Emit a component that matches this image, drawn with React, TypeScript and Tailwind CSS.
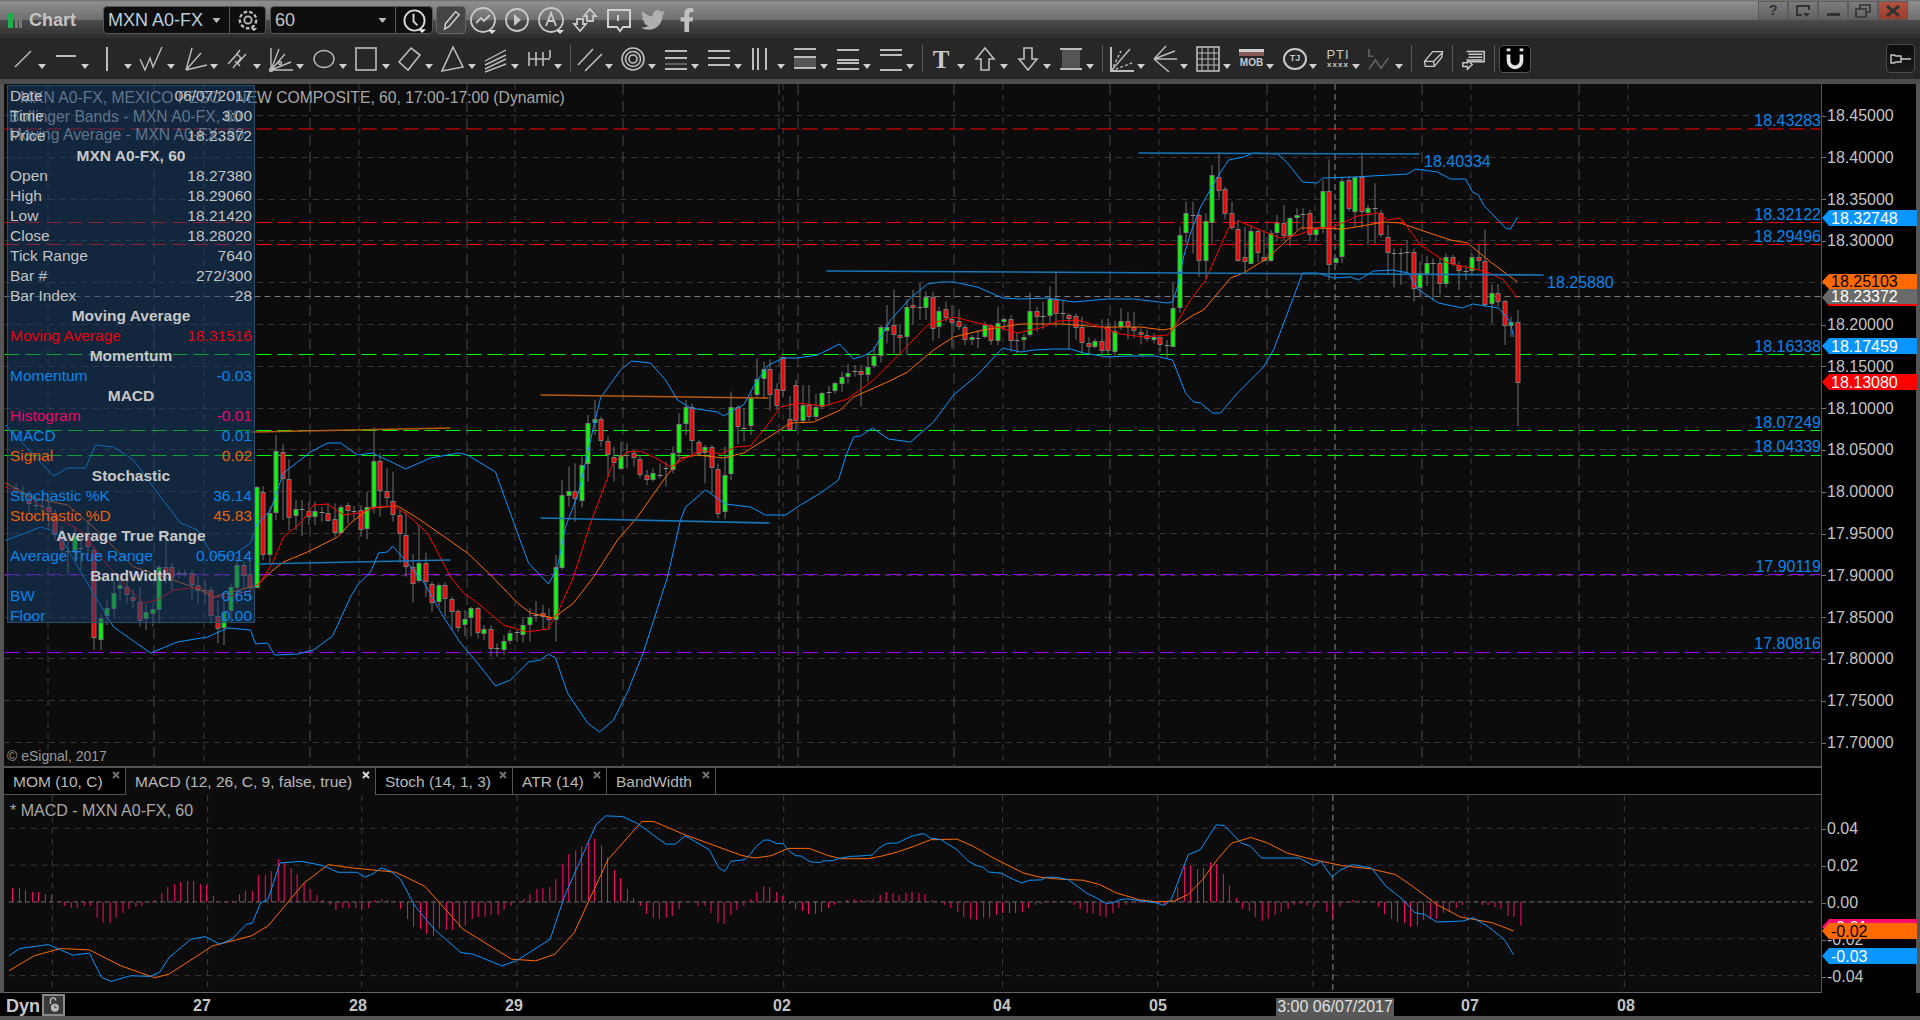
import type { ReactNode } from "react";
import { FaFacebookF, FaTwitter } from "react-icons/fa";

type Pt = [number, number];
type Bar = [number, number, number, number, number];

// bars are read right to left, y values in 3x crop units: real y = y0 + v / 3
// [bodyTop, bodyBottom, wickTop, wickBottom, 0 green / 1 red / 2 doji]
const barGroups: { y0: number; bars: Bar[] }[] = [
  {
    y0: 130,
    bars: [
      [575, 755, 540, 888, 1], [575, 584, 560, 620, 0], [514, 586, 510, 645, 1], [490, 515, 462, 530, 1],
      [490, 520, 462, 580, 0], [392, 522, 298, 530, 1], [380, 388, 345, 420, 1], [380, 418, 370, 435, 0],
      [422, 422, 405, 450, 2], [404, 418, 395, 480, 1], [382, 400, 375, 408, 1], [382, 460, 370, 472, 0],
      [400, 460, 385, 495, 1], [398, 398, 385, 512, 2], [398, 427, 378, 468, 0], [430, 472, 395, 500, 0],
      [365, 472, 355, 515, 1], [365, 365, 330, 430, 2], [368, 368, 355, 465, 2], [368, 368, 355, 472, 2],
      [320, 366, 285, 435, 1], [248, 310, 240, 322, 1], [233, 233, 160, 340, 2], [233, 244, 225, 345, 0],
      [142, 245, 68, 295, 1], [142, 245, 140, 290, 0], [150, 235, 138, 245, 1], [152, 378, 140, 400, 0],
      [383, 394, 380, 405, 0], [182, 400, 88, 450, 1], [182, 294, 150, 310, 0], [298, 312, 295, 330, 0],
      [250, 312, 240, 335, 1], [252, 252, 235, 300, 2], [255, 262, 235, 300, 0], [265, 315, 260, 350, 0],
      [278, 315, 225, 330, 1], [278, 304, 255, 335, 0], [308, 388, 300, 395, 0], [380, 388, 300, 395, 1],
      [302, 365, 295, 395, 1], [302, 397, 285, 400, 0], [382, 394, 290, 425, 1], [296, 388, 270, 395, 1],
      [250, 292, 215, 300, 1], [178, 250, 170, 268, 1], [140, 180, 68, 205, 1], [134, 275, 105, 340, 0],
      [272, 388, 250, 445, 0], [256, 390, 250, 440, 1], [255, 255, 215, 370, 2], [248, 306, 215, 340, 0],
      [316, 532, 290, 548, 0], [535, 650, 460, 652, 0], [645, 645, 630, 685, 2], [620, 640, 615, 665, 1],
      [620, 625, 610, 640, 0], [615, 625, 600, 635, 1], [605, 610, 595, 643, 1], [590, 600, 545, 625, 1],
      [572, 587, 545, 628, 1], [574, 590, 535, 600, 0], [602, 662, 572, 680, 0], [592, 660, 565, 680, 1],
    ],
  },
  {
    y0: 250,
    bars: [
      [272, 298, 208, 315, 1], [272, 286, 265, 295, 0], [278, 286, 262, 310, 1], [230, 275, 200, 310, 1],
      [197, 230, 190, 270, 1], [194, 202, 190, 298, 1], [188, 188, 150, 220, 2], [146, 188, 65, 230, 1],
      [146, 195, 108, 225, 0], [197, 197, 155, 238, 2], [182, 196, 170, 245, 1], [182, 250, 128, 260, 0],
      [260, 265, 250, 300, 0], [270, 270, 250, 310, 2], [208, 272, 195, 305, 1], [208, 215, 205, 240, 0],
      [218, 268, 170, 285, 0], [226, 270, 222, 285, 1], [226, 258, 215, 265, 0], [263, 263, 240, 295, 2],
      [262, 268, 255, 285, 0], [232, 268, 225, 285, 1], [214, 230, 178, 240, 1], [206, 214, 165, 295, 1],
      [178, 202, 155, 215, 1], [182, 226, 170, 265, 0], [142, 235, 125, 272, 1], [142, 172, 125, 210, 0],
      [170, 170, 100, 210, 2], [166, 172, 120, 225, 1], [170, 256, 148, 315, 0], [254, 258, 225, 310, 1],
      [224, 250, 118, 310, 1], [230, 238, 165, 280, 0], [232, 315, 225, 338, 0], [318, 346, 290, 355, 0],
      [350, 372, 318, 395, 0], [362, 372, 345, 470, 1], [362, 362, 345, 380, 2], [368, 376, 342, 400, 0],
      [380, 397, 365, 425, 0], [400, 420, 395, 430, 0], [425, 425, 408, 468, 2], [428, 468, 425, 478, 0],
      [472, 498, 432, 510, 0], [464, 496, 405, 512, 1], [464, 510, 405, 520, 0], [406, 512, 390, 543, 1],
      [508, 538, 438, 545, 1], [322, 420, 320, 440, 1], [418, 466, 400, 480, 1], [358, 432, 328, 482, 1],
      [358, 384, 335, 445, 0], [388, 432, 325, 440, 0], [443, 525, 430, 555, 0], [533, 533, 475, 575, 2],
      [472, 528, 465, 582, 1], [472, 670, 425, 690, 0],
    ],
  },
  {
    y0: 400,
    bars: [
      [224, 332, 140, 358, 0], [206, 338, 190, 355, 1], [142, 202, 135, 280, 1], [142, 156, 135, 250, 0],
      [125, 158, 120, 165, 1], [20, 120, 10, 165, 1], [22, 70, 0, 105, 0], [72, 155, 40, 175, 0],
      [158, 205, 140, 220, 0], [205, 205, 185, 260, 2], [225, 225, 190, 235, 2], [218, 235, 205, 245, 0],
      [224, 235, 210, 255, 1], [176, 220, 165, 235, 1], [160, 172, 150, 200, 1], [166, 166, 130, 205, 2],
      [166, 204, 125, 210, 0], [172, 188, 140, 245, 1], [124, 164, 110, 230, 1], [58, 122, 50, 140, 1],
      [58, 68, 0, 105, 0], [70, 190, 45, 245, 0], [194, 298, 170, 322, 0], [274, 295, 190, 365, 1],
      [272, 284, 200, 320, 0], [286, 502, 240, 510, 0], [500, 656, 465, 725, 0], [652, 658, 625, 690, 1],
      [640, 650, 615, 690, 1], [645, 645, 603, 665, 2], [650, 670, 625, 725, 0], [674, 700, 655, 728, 0],
      [697, 697, 690, 725, 2], [698, 720, 690, 732, 0], [724, 748, 705, 765, 0], [744, 744, 730, 770, 2],
      [686, 742, 675, 770, 1], [686, 697, 675, 720, 0], [625, 696, 620, 715, 1], [625, 652, 620, 710, 0],
      [658, 673, 630, 708, 0], [634, 682, 628, 695, 1], [598, 634, 590, 690, 1], [556, 595, 548, 650, 1],
      [556, 604, 550, 620, 0], [553, 606, 545, 635, 1], [490, 544, 458, 590, 1], [490, 540, 375, 548, 0],
      [502, 550, 462, 608, 1], [404, 498, 335, 530, 1], [346, 400, 330, 488, 1], [302, 342, 215, 365, 1],
      [272, 290, 205, 320, 1], [182, 268, 160, 350, 1], [182, 318, 82, 340, 0], [322, 385, 275, 418, 0],
      [330, 388, 315, 410, 1], [332, 332, 318, 360, 2], [314, 330, 308, 370, 1], [320, 396, 315, 402, 0],
      [358, 398, 310, 410, 1], [338, 360, 310, 365, 1], [335, 335, 320, 365, 2], [332, 348, 305, 375, 0],
      [332, 346, 305, 375, 1], [326, 326, 300, 408, 2], [328, 346, 300, 390, 0], [236, 350, 178, 392, 1],
      [155, 234, 132, 360, 1], [152, 336, 105, 360, 0], [340, 462, 320, 488, 0], [276, 462, 258, 480, 1],
      [260, 560, 258, 562, 0],
    ],
  },
  {
    y0: 370,
    bars: [
      [612, 650, 570, 690, 1], [585, 615, 575, 655, 1], [585, 650, 560, 700, 0], [650, 718, 640, 760, 0],
      [725, 770, 690, 825, 0], [738, 775, 690, 820, 1], [660, 735, 650, 760, 1], [660, 660, 630, 700, 2],
      [645, 660, 620, 700, 1], [608, 640, 600, 690, 1], [608, 608, 600, 620, 2], [610, 610, 600, 625, 2],
      [590, 620, 580, 660, 1], [592, 610, 480, 640, 1], [590, 715, 585, 760, 0], [718, 730, 700, 770, 0],
      [725, 742, 700, 780, 0], [695, 748, 650, 770, 1], [680, 690, 660, 715, 1], [650, 670, 625, 700, 1],
      [645, 655, 625, 690, 0], [668, 712, 625, 745, 0], [715, 735, 690, 765, 0], [745, 808, 730, 840, 0],
      [540, 802, 530, 840, 1], [498, 528, 450, 560, 1], [535, 535, 500, 600, 2], [498, 540, 470, 570, 0],
      [542, 542, 500, 610, 2], [502, 538, 470, 580, 1], [440, 492, 420, 510, 1], [412, 425, 395, 470, 1],
      [408, 408, 385, 425, 2], [405, 405, 390, 420, 2], [390, 400, 365, 430, 1], [370, 370, 350, 395, 2],
      [355, 355, 340, 375, 2],
    ],
  },
];

const upper: Pt[] = [
  [5, 425], [53, 476], [67, 468], [85, 468], [95, 445], [113, 447], [133, 460], [157, 493], [180, 523], [197, 530], [213, 557], [233, 555], [250, 543], [256, 525], [270, 510], [283, 473], [310, 452], [327, 443], [340, 443], [357, 455], [372, 453], [393, 463], [405, 469], [430, 458], [458, 453], [467, 455], [495, 472], [517, 533], [528, 563], [548, 584], [557, 567], [565, 527], [578, 493], [593, 427], [600, 398], [620, 370], [631, 361], [650, 363], [665, 380], [677, 400], [690, 408], [717, 412], [723, 416], [733, 410], [743, 405], [755, 383], [768, 365], [783, 358], [797, 358], [817, 355], [839, 344], [853, 359], [865, 355], [873, 350], [890, 320], [910, 298], [927, 284], [940, 282], [953, 282], [977, 287], [1002, 298], [1020, 299], [1047, 298], [1073, 302], [1107, 299], [1133, 299], [1167, 303], [1172, 302], [1177, 287], [1183, 257], [1190, 233], [1200, 207], [1217, 177], [1228, 160], [1243, 157], [1253, 153], [1277, 154], [1287, 163], [1302, 182], [1317, 183], [1322, 178], [1353, 177], [1407, 174], [1415, 169], [1437, 172], [1450, 179], [1465, 179], [1472, 192], [1478, 195], [1483, 205], [1505, 228], [1510, 229], [1517, 217],
];
const lower: Pt[] = [
  [5, 540], [20, 535], [40, 527], [50, 530], [60, 537], [95, 597], [113, 627], [150, 653], [177, 642], [207, 637], [227, 628], [250, 630], [255, 644], [267, 643], [274, 655], [297, 654], [313, 650], [332, 636], [350, 597], [357, 585], [370, 572], [378, 553], [387, 552], [392, 546], [407, 563], [423, 582], [443, 617], [460, 643], [477, 663], [495, 686], [510, 680], [528, 662], [540, 660], [548, 654], [555, 658], [567, 693], [573, 702], [587, 723], [599, 732], [613, 720], [627, 692], [643, 652], [667, 577], [680, 520], [685, 507], [705, 490], [725, 504], [750, 507], [765, 515], [785, 515], [800, 505], [820, 493], [838, 480], [845, 457], [853, 437], [860, 436], [872, 428], [888, 439], [910, 442], [933, 422], [953, 395], [977, 375], [1002, 348], [1020, 352], [1033, 350], [1053, 349], [1070, 349], [1083, 353], [1107, 357], [1127, 356], [1155, 356], [1172, 360], [1185, 393], [1193, 402], [1200, 403], [1212, 413], [1220, 413], [1237, 393], [1263, 367], [1273, 350], [1293, 297], [1302, 273], [1317, 273], [1333, 278], [1350, 277], [1358, 280], [1373, 271], [1392, 270], [1408, 273], [1417, 289], [1438, 303], [1462, 308], [1472, 304], [1498, 308], [1510, 322], [1513, 337],
];
const redMa: Pt[] = [
  [5, 487], [25, 495], [50, 513], [83, 533], [100, 557], [123, 583], [143, 603], [157, 600], [173, 590], [200, 587], [213, 597], [227, 597], [250, 590], [260, 582], [272, 563], [283, 537], [300, 523], [313, 505], [327, 504], [343, 515], [357, 513], [377, 507], [393, 506], [407, 515], [427, 533], [450, 577], [463, 593], [477, 603], [503, 625], [527, 632], [547, 629], [557, 613], [573, 577], [590, 523], [613, 462], [627, 452], [640, 451], [655, 458], [670, 467], [687, 457], [700, 450], [720, 454], [735, 447], [750, 446], [763, 430], [780, 407], [797, 403], [823, 406], [847, 399], [873, 380], [900, 353], [927, 325], [953, 317], [977, 323], [1000, 328], [1017, 333], [1043, 327], [1057, 321], [1077, 320], [1100, 327], [1120, 334], [1143, 337], [1167, 335], [1172, 330], [1190, 300], [1205, 280], [1228, 228], [1238, 221], [1257, 229], [1280, 238], [1297, 235], [1317, 228], [1333, 227], [1357, 216], [1377, 213], [1387, 220], [1400, 218], [1420, 245], [1447, 263], [1470, 268], [1487, 272], [1503, 280], [1517, 298],
];
const orangeMa: Pt[] = [
  [5, 483], [33, 498], [67, 505], [93, 527], [133, 567], [173, 580], [200, 590], [213, 597], [257, 585], [270, 572], [283, 562], [307, 552], [337, 537], [350, 523], [370, 508], [397, 506], [417, 518], [437, 532], [467, 553], [490, 575], [517, 603], [530, 613], [553, 618], [573, 603], [593, 577], [617, 540], [637, 517], [663, 480], [680, 458], [697, 455], [723, 458], [743, 453], [767, 438], [790, 423], [813, 422], [840, 410], [853, 397], [887, 382], [907, 372], [933, 350], [953, 337], [983, 330], [1020, 324], [1063, 324], [1100, 327], [1140, 327], [1163, 330], [1173, 328], [1193, 315], [1203, 310], [1230, 278], [1243, 273], [1267, 258], [1300, 228], [1320, 228], [1343, 229], [1367, 225], [1383, 222], [1400, 223], [1420, 230], [1450, 240], [1467, 243], [1490, 262], [1517, 282],
];

// MACD curves, taken from three crops with their own scales
const crop = (x0: number, y0: number, sx: number, pts: Pt[]): Pt[] =>
  pts.map(([x, y]) => [x0 + x / sx, y0 + y / 3] as Pt);

const macdBlue: Pt[] = [
  ...crop(0, 740, 2.063, [[8, 650], [30, 628], [90, 616], [140, 648], [175, 642], [200, 715], [220, 727], [260, 710], [300, 712], [320, 700], [340, 655], [385, 600], [415, 592], [445, 615], [470, 600], [500, 555], [512, 552], [530, 490], [545, 480], [570, 370], [615, 365], [660, 378], [690, 398], [730, 398], [745, 412], [760, 405], [780, 385], [800, 395], [820, 420], [850, 500], [890, 570], [945, 640], [970, 645], [1030, 680], [1060, 665], [1130, 600], [1160, 470], [1225, 255], [1245, 228], [1280, 230], [1310, 250], [1370, 313], [1390, 313], [1410, 288], [1460, 330], [1480, 385], [1492, 395], [1505, 365]]),
  ...crop(740, 795, 3, [[10, 195], [30, 175], [45, 155], [68, 136], [85, 136], [105, 146], [125, 146], [145, 170], [165, 183], [180, 184], [205, 200], [220, 203], [240, 203], [245, 199], [275, 198], [300, 190], [330, 185], [355, 184], [395, 181], [415, 160], [435, 148], [450, 145], [470, 145], [500, 130], [515, 124], [550, 116], [570, 130], [600, 134], [650, 165], [685, 200], [710, 213], [730, 218], [745, 232], [785, 236], [810, 250], [845, 265], [870, 257], [905, 256], [920, 248], [950, 248], [985, 255], [1040, 295], [1070, 310], [1100, 327], [1120, 325], [1140, 316], [1160, 313], [1250, 325], [1275, 333]]),
  ...crop(1160, 780, 2.063, [[25, 360], [60, 225], [85, 210], [118, 135], [135, 137], [170, 190], [190, 200], [212, 235], [240, 235], [290, 235], [320, 258], [335, 245], [358, 292], [375, 272], [400, 255], [440, 265], [470, 320], [505, 360], [530, 400], [550, 405], [575, 428], [630, 425], [650, 415], [680, 440], [715, 480], [735, 527]]),
];
const macdOrange: Pt[] = [
  ...crop(0, 740, 2.063, [[8, 695], [60, 650], [115, 628], [175, 632], [240, 680], [310, 716], [340, 705], [430, 620], [510, 590], [545, 560], [620, 430], [670, 375], [720, 385], [810, 398], [870, 440], [950, 570], [1050, 660], [1100, 665], [1140, 645], [1180, 580], [1250, 360], [1320, 245], [1345, 245], [1410, 285]]),
  ...crop(740, 795, 3, [[0, 182], [40, 190], [90, 183], [140, 161], [205, 161], [260, 182], [300, 192], [380, 192], [420, 185], [470, 172], [520, 155], [570, 135], [650, 133], [700, 155], [760, 190], [850, 235], [900, 248], [950, 253], [1030, 257], [1080, 270], [1130, 295], [1200, 316], [1250, 322]]),
  ...crop(1160, 780, 2.063, [[30, 365], [60, 345], [90, 300], [120, 240], [150, 190], [190, 173], [225, 190], [265, 220], [320, 240], [380, 258], [440, 268], [490, 285], [530, 325], [575, 375], [625, 413], [690, 430], [735, 455]]),
];

// histogram heights in px above the zero line, left to right
const histogram: { x: number; v: number[] }[] = [
  {
    x: 7.3,
    v: [14, 14, 12, 10, 10, 8, 7, 1, -4, -6, -6, -4, -4, -16, -21, -21, -16, -11, -7, -5, -4, -1, 2, 9, 15, 18, 20, 21, 21, 18, 17, 6, 0, -1, 1, 8, 11, 11, 27, 27, 31, 43, 40, 34, 28, 19, 13, 7, 2, -3, -8, -6, -6, -6, -8, -6, 2, 3, 2, 0, -7, -17, -25, -27, -32, -34, -27, -28, -28, -26, -24, -17, -15, -15, -13, -13, -8, -4, 0, 3, 8, 13, 14, 15, 23, 38, 48, 52, 56, 60, 64, 57, 45, 32, 24, 13, 4, -4, -12, -16, -17, -16, -14, -7, 0, 0, -4, -4, -11, -21, -22, -13, -8],
  },
  {
    x: 742.3,
    v: [-4, 3, 10, 16, 15, 10, 6, -2, -7, -9, -12, -12, -10, -6, -3, 0, 2, 3, 2, 2, 3, 7, 10, 9, 7, 9, 10, 9, 8, 2, 0, -3, -6, -10, -15, -17, -18, -16, -16, -13, -11, -11, -11, -10, -6, -3, -2, 1, 1, 1, 0, -3, -7, -11, -12, -14, -15, -11, -6, -3, -1, -1, -1, -1, -2, -3],
  },
  {
    x: 1171.6,
    v: [2, 15, 36, 37, 33, 34, 40, 38, 28, 17, 4, -7, -9, -15, -19, -17, -13, -10, -7, -3, -2, -4, -5, 0, -10, -17, -5, -1, 2, 1, 0, 0, -5, -12, -17, -20, -21, -25, -24, -18, -17, -17, -11, -10, -6, -3, 0, 1, -3, -3, -5, -7, -14, -15, -24],
  },
];

const priceLabels = ["18.45000", "18.40000", "18.35000", "18.30000", "18.25000", "18.20000", "18.15000", "18.10000", "18.05000", "18.00000", "17.95000", "17.90000", "17.85000", "17.80000", "17.75000", "17.70000"];
const priceY = (p: number) => 115 + (18.45 - p) * 836;

const levels = [
  { y: 129, top: 121, text: "18.43283", color: "#ff0000" },
  { y: 222.5, top: 215, text: "18.32122", color: "#ff0000" },
  { y: 244.5, top: 237, text: "18.29496", color: "#ff0000" },
  { y: 354.5, top: 347, text: "18.16338", color: "#00ff00" },
  { y: 430.5, top: 423, text: "18.07249", color: "#00ff00" },
  { y: 455.5, top: 447, text: "18.04339", color: "#00ff00" },
  { y: 574.5, top: 567, text: "17.90119", color: "#a000ff" },
  { y: 652.5, top: 644, text: "17.80816", color: "#a000ff" },
];

const longDash = [153, 309, 466, 622, 778, 797, 953, 1109, 1266, 1421, 1578];
const shortDash = [47, 203, 358, 514, 782, 1002, 1158, 1314, 1470, 1627];
const macdVerticals = [47, 203, 358, 514, 782, 1002, 1158, 1314, 1470, 1627];
const macdGrid = [828.5, 865.5, 939.5, 976.5];
const CROSS_X = 1334.5;

const dates = [
  { x: 202, t: "27" }, { x: 358, t: "28" }, { x: 514, t: "29" }, { x: 782, t: "02" },
  { x: 1002, t: "04" }, { x: 1158, t: "05" }, { x: 1470, t: "07" }, { x: 1626, t: "08" },
];

const toPoints = (pts: Pt[]) => pts.map((p) => p.join(",")).join(" ");

const Candles = () => {
  let k = 0;
  const out: ReactNode[] = [];
  barGroups.forEach(({ y0, bars }) => {
    bars.forEach(([top, bot, wt, wb, c]) => {
      const x = Math.round(1516.7 - 6.5 * k);
      const y = (v: number) => y0 + v / 3;
      out.push(
        <g key={k}>
          <line x1={x + 0.5} x2={x + 0.5} y1={y(wt)} y2={y(wb)} stroke="#6e6e6e" />
          {c === 2 ? (
            <line x1={x - 2} x2={x + 3} y1={Math.round(y(top)) + 0.5} y2={Math.round(y(top)) + 0.5} stroke="#8a8a8a" />
          ) : (
            <rect
              x={x - 1.5}
              y={Math.round(y(top)) + 0.5}
              width={4}
              height={Math.max(2, Math.round((bot - top) / 3))}
              fill={c === 1 ? "#ff0000" : "#00ff00"}
              stroke="#777"
            />
          )}
        </g>
      );
      k++;
    });
  });
  return <>{out}</>;
};

const PriceChart = () => (
  <svg viewBox="4 84 1816 682" className="absolute inset-0 h-full w-full">
    {priceLabels.map((p) => (
      <line key={p} x1={4} x2={1820} y1={Math.round(priceY(+p)) + 0.5} y2={Math.round(priceY(+p)) + 0.5} stroke="#353535" strokeDasharray="6 5" />
    ))}
    {longDash.map((x) => (
      <line key={x} x1={x + 0.5} x2={x + 0.5} y1={84} y2={766} stroke="#484848" strokeDasharray="11 6" />
    ))}
    {shortDash.map((x) => (
      <line key={x} x1={x + 0.5} x2={x + 0.5} y1={84} y2={766} stroke="#3a3a3a" strokeDasharray="6 5" />
    ))}
    {levels.map((l) => (
      <line key={l.text} x1={4} x2={1820} y1={l.y} y2={l.y} stroke={l.color} strokeDasharray="15 6" />
    ))}
    <line x1={4} x2={1820} y1={296.5} y2={296.5} stroke="#7a7a7a" strokeDasharray="6 4" />
    <line x1={CROSS_X} x2={CROSS_X} y1={84} y2={766} stroke="#888" strokeDasharray="6 4" />
    <Candles />
    <polyline points={toPoints(upper)} fill="none" stroke="#0a94ff" />
    <polyline points={toPoints(lower)} fill="none" stroke="#0a94ff" />
    <polyline points={toPoints(orangeMa)} fill="none" stroke="#ff6a00" />
    <polyline points={toPoints(redMa)} fill="none" stroke="#ff0000" />
    <line x1={1138} y1={153} x2={1419} y2={154} stroke="#1577b8" strokeWidth={1.6} />
    <line x1={826} y1={271} x2={1543} y2={275} stroke="#1577b8" strokeWidth={1.6} />
    <line x1={540} y1={518} x2={769} y2={523} stroke="#1577b8" strokeWidth={1.6} />
    <line x1={257} y1={564} x2={450} y2={560} stroke="#1577b8" strokeWidth={1.6} />
    <line x1={250} y1={432} x2={450} y2={428} stroke="#b85a10" strokeWidth={1.6} />
    <line x1={540} y1={395} x2={768} y2={398} stroke="#b85a10" strokeWidth={1.6} />
  </svg>
);

const MacdChart = () => (
  <svg viewBox="4 795 1816 198" className="absolute inset-0 h-full w-full">
    {macdGrid.map((y) => (
      <line key={y} x1={4} x2={1820} y1={y} y2={y} stroke="#353535" strokeDasharray="6 5" />
    ))}
    {macdVerticals.map((x) => (
      <line key={x} x1={x + 0.5} x2={x + 0.5} y1={795} y2={993} stroke="#3a3a3a" strokeDasharray="6 5" />
    ))}
    <line x1={CROSS_X} x2={CROSS_X} y1={795} y2={993} stroke="#888" strokeDasharray="6 4" />
    {histogram.map((seg) =>
      seg.v.map((h, i) => {
        const x = Math.round(seg.x + i * 6.5) + 0.5;
        return <line key={`${seg.x}-${i}`} x1={x} x2={x} y1={902.5} y2={902.5 - h} stroke="#ff0a6e" />;
      })
    )}
    <line x1={4} x2={1820} y1={902.5} y2={902.5} stroke="#707070" strokeDasharray="5 3" />
    <polyline points={toPoints(macdOrange)} fill="none" stroke="#ff6a00" />
    <polyline points={toPoints(macdBlue)} fill="none" stroke="#0a94ff" />
  </svg>
);

type RowProps = { label: string; value?: string; color?: string };

const Row = ({ label, value, color = "text-[#c4c4c4]" }: RowProps) => (
  <div className={`flex h-5 items-center justify-between ${color}`}>
    <span>{label}</span>
    <span>{value}</span>
  </div>
);

const Head = ({ children }: { children: ReactNode }) => (
  <div className="flex h-5 items-center justify-center font-bold text-[#c8c8c8]">{children}</div>
);

const CursorPanel = () => (
  <div className="absolute left-[3px] top-px h-[538px] w-[248px] border border-[#26506a] bg-[#18406e]/50 px-[2px] text-[15.5px] leading-5">
    <Row label="Date" value="06/07/2017" />
    <Row label="Time" value="3:00" />
    <Row label="Price" value="18.23372" />
    <Head>MXN A0-FX, 60</Head>
    <Row label="Open" value="18.27380" />
    <Row label="High" value="18.29060" />
    <Row label="Low" value="18.21420" />
    <Row label="Close" value="18.28020" />
    <Row label="Tick Range" value="7640" />
    <Row label="Bar #" value="272/300" />
    <Row label="Bar Index" value="-28" />
    <Head>Moving Average</Head>
    <Row label="Moving Average" value="18.31516" color="text-[#e8000c]" />
    <Head>Momentum</Head>
    <Row label="Momentum" value="-0.03" color="text-[#0a84e8]" />
    <Head>MACD</Head>
    <Row label="Histogram" value="-0.01" color="text-[#e80a68]" />
    <Row label="MACD" value="0.01" color="text-[#0a84e8]" />
    <Row label="Signal" value="0.02" color="text-[#e8620a]" />
    <Head>Stochastic</Head>
    <Row label="Stochastic %K" value="36.14" color="text-[#0a84e8]" />
    <Row label="Stochastic %D" value="45.83" color="text-[#e8620a]" />
    <Head>Average True Range</Head>
    <Row label="Average True Range" value="0.05014" color="text-[#0a84e8]" />
    <Head>BandWidth</Head>
    <Row label="BW" value="0.65" color="text-[#0a84e8]" />
    <Row label="Floor" value="0.00" color="text-[#0a84e8]" />
  </div>
);

const PriceTag = ({ top, text, cls, h = "h-4" }: { top: number; text: string; cls: string; h?: string }) => (
  <div
    className={`absolute left-0 flex w-[95px] items-center pl-[9px] pt-px text-[16px] [clip-path:polygon(0_50%,7px_0,100%_0,100%_100%,7px_100%)] ${h} ${cls}`}
    style={{ top }}
  >
    {text}
  </div>
);

const Caret = () => (
  <svg viewBox="0 0 8 5" className="ml-px mt-[16px] h-[5px] w-2 shrink-0">
    <path d="M0 0H8L4 5Z" fill="#cfcfcf" />
  </svg>
);

const Tool = ({ children, fill }: { children: ReactNode; fill?: string }) => (
  <div className="flex h-full w-[43px] shrink-0 items-center pl-[5px]">
    <svg viewBox="0 0 28 28" className="h-7 w-7 shrink-0" fill={fill ?? "none"} stroke="#bdbdbd" strokeWidth={1.4}>
      {children}
    </svg>
    <Caret />
  </div>
);

const Sep = () => <div className="ml-[7px] h-[27px] w-px shrink-0 bg-[#5a5a5a]" />;

const WinButton = ({ children, red }: { children: ReactNode; red?: boolean }) => (
  <div
    className={`flex h-[19px] w-[30px] items-center justify-center border border-[#5c5c5c] ${
      red
        ? "bg-[linear-gradient(to_bottom,#b25240,#9a3c2c)]"
        : "bg-[linear-gradient(to_bottom,#7c7c7c,#626262)]"
    }`}
  >
    {children}
  </div>
);

const TitleBar = () => (
  <div className="flex h-[38px] shrink-0 items-center bg-[linear-gradient(to_bottom,#6c6c6c_0,#8e8e8e_2px,#6e6e6e_20px,#4c4c4c_20px,#2d2d2d_38px)] pl-2 pr-3 pt-[2px]">
    <div className="flex h-[15px] gap-[1.5px]">
      <div className="w-[5px] bg-[#1fae4e]" />
      <div className="w-[3px] bg-[#777]" />
      <div className="w-[3px] bg-[#777]" />
    </div>
    <span className="ml-[7px] text-[18px] font-bold text-[#c4c4c4]">Chart</span>
    <div className="ml-[27px] flex h-[28px] w-[163px] items-center rounded-[4px] border border-[#555] bg-[#0e0e0e]">
      <span className="w-[105px] pl-1 text-[18px] text-[#b8cfe0]">MXN A0-FX</span>
      <svg viewBox="0 0 8 5" className="ml-[3px] h-[5px] w-[9px]">
        <path d="M0 0H8L4 5Z" fill="#bbb" />
      </svg>
      <div className="ml-[8px] flex h-full flex-1 items-center justify-center border-l border-[#555]">
        <svg viewBox="0 0 24 24" className="h-[22px] w-[22px]" fill="none" stroke="#bbb" strokeWidth={2}>
          <circle cx="12" cy="12" r="4" />
          <circle cx="12" cy="12" r="9" strokeDasharray="4 2.2" strokeWidth={2.6} />
          <path d="M15 21h7l-3.5 3z" fill="#ddd" stroke="none" />
        </svg>
      </div>
    </div>
    <div className="ml-1 flex h-[28px] w-[163px] items-center rounded-[4px] border border-[#555] bg-[#0e0e0e]">
      <span className="w-[107px] pl-1 text-[18px] text-[#c4c4c4]">60</span>
      <svg viewBox="0 0 8 5" className="h-[5px] w-[9px]">
        <path d="M0 0H8L4 5Z" fill="#bbb" />
      </svg>
      <div className="ml-[8px] flex h-full flex-1 items-center justify-center border-l border-[#555]">
        <svg viewBox="0 0 26 26" className="h-[25px] w-[25px]" fill="none" stroke="#d8d8d8" strokeWidth={2}>
          <circle cx="13" cy="13" r="10.5" />
          <path d="M12 6v8l4 4" />
          <path d="M17 22h8l-4 4z" fill="#eee" stroke="none" />
        </svg>
      </div>
    </div>
    <div className="ml-[3px] flex h-[28px] w-[30px] items-center justify-center rounded-[4px] border border-[#666] bg-[#444]">
      <svg viewBox="0 0 24 24" className="h-[22px] w-[22px]" fill="none" stroke="#d0d0d0" strokeWidth={1.6}>
        <path d="M5 22l1-6L17 3l4 3-11 13z" />
      </svg>
    </div>
    <div className="ml-[3px] flex items-center gap-[6px]">
      <svg viewBox="0 0 28 28" className="h-7 w-7" fill="none" stroke="#c8c8c8" strokeWidth={1.8}>
        <circle cx="14" cy="14" r="12" />
        <path d="M7 17l5-5 3 3 6-6" />
        <path d="M19 24h8l-4 4z" fill="#ddd" stroke="none" />
      </svg>
      <svg viewBox="0 0 28 28" className="h-7 w-7" fill="none" stroke="#c8c8c8" strokeWidth={1.8}>
        <circle cx="14" cy="14" r="11" />
        <path d="M11 8l7 6-7 6z" fill="#c8c8c8" stroke="none" />
      </svg>
      <svg viewBox="0 0 28 28" className="h-7 w-7" fill="none" stroke="#c8c8c8" strokeWidth={1.8}>
        <circle cx="14" cy="14" r="12" />
        <path d="M9 20l5-13 5 13M11 15h6" />
        <path d="M19 24h8l-4 4z" fill="#ddd" stroke="none" />
      </svg>
      <svg viewBox="0 0 28 28" className="h-7 w-7" fill="none" stroke="#c8c8c8" strokeWidth={1.8}>
        <path d="M19 3l6 7h-3v5h-6v-5h-3zM9 25l-6-7h3v-5h6v5h3z" />
      </svg>
      <svg viewBox="0 0 28 28" className="h-7 w-7" fill="none" stroke="#d0d0d0" strokeWidth={2}>
        <path d="M3 4h22v17h-7l-3 4-3-4H3z" />
        <path d="M13 9v6" />
      </svg>
      <FaTwitter className="h-6 w-7 text-[#b0b0b0]" />
      <FaFacebookF className="h-6 w-7 text-[#c0c0c0]" />
    </div>
    <div className="ml-auto -mt-[19px] flex">
      <WinButton>
        <span className="text-[15px] font-bold text-[#333]">?</span>
      </WinButton>
      <WinButton>
        <svg viewBox="0 0 16 14" className="h-[14px] w-4" fill="none" stroke="#333" strokeWidth={2}>
          <path d="M14 6V2H2v9h5" />
          <path d="M8 9h7l-3.5 4z" fill="#333" stroke="none" />
        </svg>
      </WinButton>
      <WinButton>
        <div className="mt-[7px] h-[3px] w-[13px] bg-[#333]" />
      </WinButton>
      <WinButton>
        <svg viewBox="0 0 16 14" className="h-[14px] w-4" fill="none" stroke="#333" strokeWidth={1.6}>
          <path d="M1 5h10v8H1zM5 5V1h10v7h-4" />
        </svg>
      </WinButton>
      <WinButton red>
        <svg viewBox="0 0 14 12" className="h-3 w-[14px]" fill="none" stroke="#333" strokeWidth={3}>
          <path d="M1 1l12 10M13 1L1 11" />
        </svg>
      </WinButton>
    </div>
  </div>
);

const ToolBar = () => (
  <div className="flex h-[41px] shrink-0 items-center bg-[#272727] pl-1 pr-[5px]">
    <Tool><path d="M6 22L22 6" /></Tool>
    <Tool><path d="M4 11H24" strokeWidth={2} /></Tool>
    <Tool><path d="M12 2V26" strokeWidth={2} /></Tool>
    <Tool><path d="M2 14l5 11 5-12 3 9L24 2" /></Tool>
    <Tool><path d="M5 25L11 3M5 25L20 8M5 25L26 20" /></Tool>
    <Tool><path d="M4 19L13 9l4 4-8 10M9 14L16 5M14 18l8-9M11 16l5 5" /></Tool>
    <Tool><path d="M4 3V25H26M4 25L18 9M4 25L12 4M4 25L24 17" /><circle cx="4" cy="25" r="1.5" /><circle cx="13" cy="18" r="1.5" /></Tool>
    <Tool><ellipse cx="14" cy="14" rx="10" ry="8.5" /></Tool>
    <Tool><rect x="3" y="3" width="20" height="22" strokeWidth={1.6} /></Tool>
    <Tool><path d="M3 17L15 3l9 7L12 25z" strokeWidth={1.6} /></Tool>
    <Tool><path d="M14 2L24 22 3 26z" strokeWidth={1.6} /></Tool>
    <Tool><path d="M3 16L24 5M3 20L24 10M3 24L24 14M3 27L24 19" /></Tool>
    <Tool><path d="M4 7v14M11 7v14M18 7v14M25 5v8M4 14H25" strokeWidth={1.6} /></Tool>
    <Sep />
    <Tool><path d="M2 20L17 4M9 26L26 9" strokeWidth={1.6} /></Tool>
    <Tool>
      <circle cx="14" cy="14" r="11" strokeWidth={1.6} />
      <circle cx="14" cy="14" r="7.5" strokeWidth={1.6} />
      <circle cx="14" cy="14" r="4" strokeWidth={1.6} />
    </Tool>
    <Tool><path d="M3 6H25M3 13H25M3 24H25" strokeWidth={2} /><path d="M3 19H25" stroke="#777" /></Tool>
    <Tool><path d="M3 6H25M3 13H25M3 20H25" strokeWidth={2} /></Tool>
    <Tool><path d="M5 3V25M10 3V25M18 3V25" strokeWidth={2} /></Tool>
    <Tool><rect x="3" y="12" width="22" height="10" fill="#555" stroke="none" /><path d="M3 4H25M3 12H25M3 23H25" strokeWidth={2} /></Tool>
    <Tool><path d="M3 5H25M3 15H25M3 18H25M3 24H25" strokeWidth={2} /></Tool>
    <Tool><path d="M3 5H25M3 10H25M3 25H25" strokeWidth={2} /></Tool>
    <Sep />
    <Tool>
      <text x="13" y="23" textAnchor="middle" fontSize="25" fontWeight="bold" fontFamily="'Liberation Serif', serif" fill="#c8c8c8" stroke="none">T</text>
    </Tool>
    <Tool><path d="M14 3L23 14H18V25H10V14H5z" strokeWidth={1.6} /></Tool>
    <Tool><path d="M14 25L23 14H18V3H10V14H5z" strokeWidth={1.6} /></Tool>
    <Tool><rect x="5" y="4" width="18" height="20" fill="#555" stroke="none" /><path d="M3 4H25M3 24H25" strokeWidth={2} /></Tool>
    <Sep />
    <Tool><path d="M3 2V26H26" strokeWidth={2} /><path d="M3 26L13 6M3 26L24 18" strokeDasharray="3 2" /><path d="M3 26L22 4" /></Tool>
    <Tool><path d="M3 14L24 6M3 14L26 14M3 14L18 27M3 14L15 1" /></Tool>
    <Tool>
      <rect x="3" y="2" width="22" height="24" strokeWidth={1.6} />
      <path d="M3 8H25M3 14H25M3 20H25M8 2V26M14 2V26M20 2V26" strokeWidth={1} />
    </Tool>
    <div className="flex h-full w-[43px] shrink-0 items-center">
      <div className="w-[33px] pl-[7px]">
        <div className="flex w-[25px] flex-col items-center">
          <div className="h-[3px] w-full bg-[#d0d0d0]" />
          <div className="h-[4px] w-full bg-[#8a5a5a]" />
          <span className="mt-px text-[10px] font-bold leading-[12px] text-[#c8c8c8]">MOB</span>
        </div>
      </div>
      <Caret />
    </div>
    <div className="flex h-full w-[43px] shrink-0 items-center">
      <div className="w-[33px] pl-[8px]">
        <div className="flex h-[22px] w-[24px] items-center justify-center rounded-[50%] border-2 border-[#c8c8c8] text-[9px] font-bold text-[#c8c8c8]">TJ</div>
      </div>
      <Caret />
    </div>
    <div className="flex h-full w-[43px] shrink-0 items-center">
      <div className="w-[33px] pl-[8px]">
        <div className="flex w-[24px] flex-col items-center leading-none text-[#c8c8c8]">
          <span className="text-[13px] tracking-[1px]">PTI</span>
          <span className="text-[8px] font-bold tracking-[1px]">xxxx</span>
        </div>
      </div>
      <Caret />
    </div>
    <div className="flex h-full w-[43px] shrink-0 items-center">
      <div className="w-[33px] pl-[6px]">
        <svg viewBox="0 0 28 28" className="h-[26px] w-[26px]" fill="none" stroke="#5f5f5f" strokeWidth={1.8}>
          <path d="M2 3v8h5M2 25l7-10 6 9 8-11" />
        </svg>
      </div>
      <Caret />
    </div>
    <Sep />
    <div className="w-[33px] shrink-0 pl-[10px]">
      <svg viewBox="0 0 28 24" className="h-[22px] w-[23px]" fill="none" stroke="#c8c8c8" strokeWidth={1.6}>
        <path d="M3 15L13 3h12l-1 7-9 11H4zM3 15h11l1 6M14 15L24 5" />
      </svg>
    </div>
    <Sep />
    <div className="w-[34px] shrink-0 pl-[8px]">
      <svg viewBox="0 0 28 24" className="h-6 w-[26px]" fill="none" stroke="#c8c8c8" strokeWidth={1.6}>
        <path d="M6 4h19v11H10" />
        <path d="M8 7h15M8 10h15M8 13h15" />
        <path d="M2 16h5v-3l5 5-5 5v-3H2z" />
      </svg>
    </div>
    <Sep />
    <div className="ml-[4px] flex h-[28px] w-[32px] shrink-0 items-center justify-center rounded-[4px] border border-[#555] bg-black">
      <svg viewBox="0 0 26 26" className="h-6 w-6" fill="none" stroke="#e4e4e4">
        <path d="M6 8v7a7 7 0 0 0 14 0V8" strokeWidth={4} />
        <path d="M4 3h4M18 3h4" strokeWidth={3} />
      </svg>
    </div>
    <div className="ml-auto flex h-[29px] w-[29px] items-center justify-center rounded-[4px] border border-[#4a4a4a] bg-[linear-gradient(to_bottom,#0c0c0c,#1c1c1c)]">
      <svg viewBox="0 0 24 16" className="h-4 w-6" fill="none" stroke="#c8c8c8" strokeWidth={1.4}>
        <path d="M2 4h3l2 1h5v6H7l-2 1H2zM12 8h10" />
      </svg>
    </div>
  </div>
);

const tabs = [
  { label: "MOM (10, C)", w: "w-[122px]" },
  { label: "MACD (12, 26, C, 9, false, true)", w: "w-[250px]", active: true },
  { label: "Stoch (14, 1, 3)", w: "w-[137px]" },
  { label: "ATR (14)", w: "w-[94px]" },
  { label: "BandWidth", w: "w-[109px]" },
];

const TabClose = ({ active }: { active?: boolean }) => (
  <svg viewBox="0 0 8 8" className="absolute right-[5px] top-[3px] h-2 w-2" fill="none" stroke={active ? "#d8d8d8" : "#707070"} strokeWidth={2}>
    <path d="M1 1l6 6M7 1L1 7" />
  </svg>
);

const Tabs = () => (
  <div className="flex h-[29px] shrink-0 bg-black">
    <div className="flex flex-1 border-t-2 border-b border-[#555]">
      {tabs.map((t) => (
        <div
          key={t.label}
          className={`relative -mb-px flex items-center border-r border-[#555] pl-[9px] pt-px text-[15.5px] text-[#b8b8b8] ${t.w} ${
            t.active ? "bg-[#0c0c0c]" : "border-b"
          }`}
        >
          {t.label}
          <TabClose active={t.active} />
        </div>
      ))}
    </div>
    <div className="w-[95px] border-l border-[#555]" />
  </div>
);

export default function App() {
  return (
    <div className="flex h-[1020px] w-[1920px] flex-col overflow-hidden bg-[#555] [font-family:'Liberation_Sans',Arial,sans-serif]">
      <TitleBar />
      <ToolBar />
      <div className="h-[5px] shrink-0 bg-[#4d4d4d]" />

      <div className="flex h-[682px] shrink-0 px-1">
        <div className="relative flex-1 bg-[#0c0c0c]">
          <PriceChart />
          <div className="absolute left-[16px] top-[5px] whitespace-nowrap text-[15.7px] leading-[18px] text-[#a8a8a8]">
            MXN A0-FX, MEXICO PESO - NEW COMPOSITE, 60, 17:00-17:00 (Dynamic)
          </div>
          <div className="absolute left-[5px] top-[24px] whitespace-nowrap text-[15.7px] leading-[18px] text-[#a8a8a8]">
            Bollinger Bands - MXN A0-FX, 60
          </div>
          <div className="absolute left-[5px] top-[42px] whitespace-nowrap text-[15.7px] leading-[18px] text-[#a8a8a8]">
            Moving Average - MXN A0-FX, 60
          </div>
          {levels.map((l) => (
            <div
              key={l.text}
              className="absolute right-0 text-[16px] leading-[18px] text-[#0a84e8]"
              style={{ top: l.top - 84 - 9 }}
            >
              {l.text}
            </div>
          ))}
          <div className="absolute left-[1420px] top-[69px] text-[16px] leading-[18px] text-[#0a84e8]">18.40334</div>
          <div className="absolute left-[1543px] top-[190px] text-[16px] leading-[18px] text-[#0a84e8]">18.25880</div>
          <div className="absolute bottom-[1px] left-[3px] text-[14px] leading-[18px] text-[#9a9a9a]">© eSignal, 2017</div>
          <CursorPanel />
        </div>
        <div className="relative w-[95px] border-l border-[#555] bg-black text-[16px] text-[#c4c4c4]">
          {priceLabels.map((p) => (
            <div key={p} className="absolute flex items-center" style={{ top: priceY(+p) - 84 - 8 }}>
              <div className="h-px w-[4px] bg-[#777]" />
              <span className="ml-[1px] leading-[18px]">{p}</span>
            </div>
          ))}
          <PriceTag top={126} text="18.32748" cls="bg-[#0a96ff] text-white" />
          <PriceTag top={190} text="18.25103" cls="bg-[#ff6a00] text-black" h="h-[15px]" />
          <PriceTag top={205} text="18.23372" cls="bg-[#6a6a6a] text-white border-b-2 border-[#ff0000]" h="h-[17px]" />
          <PriceTag top={254} text="18.17459" cls="bg-[#0a96ff] text-white" />
          <PriceTag top={290} text="18.13080" cls="bg-[#ff0000] text-white" />
        </div>
      </div>

      <div className="px-1">
        <Tabs />
      </div>

      <div className="flex h-[198px] shrink-0 px-1">
        <div className="relative flex-1 border-b border-[#666] bg-[#0c0c0c]">
          <MacdChart />
          <div className="absolute left-[6px] top-[7px] text-[16px] leading-[18px] text-[#a8a8a8]">* MACD - MXN A0-FX, 60</div>
        </div>
        <div className="relative w-[95px] border-l border-[#555] bg-black text-[16px] text-[#c4c4c4]">
          {["0.04", "0.02", "0.00", "-0.02", "-0.04"].map((t, i) => (
            <div key={t} className="absolute flex items-center" style={{ top: 25 + i * 37 }}>
              <div className="h-px w-[4px] bg-[#777]" />
              <span className="ml-[1px] leading-[18px]">{t}</span>
            </div>
          ))}
          <PriceTag top={124} text="-0.01" cls="bg-[#ff0a6e] text-white" />
          <PriceTag top={128} text="-0.02" cls="bg-[#ff6a00] text-black" />
          <PriceTag top={153} text="-0.03" cls="bg-[#0a96ff] text-white" />
        </div>
      </div>

      <div className="flex h-[23px] shrink-0 bg-black px-1">
        <div className="relative flex flex-1 items-center bg-black">
          <span className="ml-[2px] mt-[3px] text-[18px] font-bold leading-none text-[#c8c8c8]">Dyn</span>
          <div className="ml-[2px] flex h-[22px] w-[23px] items-center justify-center border-2 border-[#8a8a8a] bg-[#3a3a3a]">
            <svg viewBox="0 0 16 18" className="h-4 w-4" fill="none" stroke="#b8b8b8" strokeWidth={1.6}>
              <path d="M4 8V4a3 3 0 0 1 6 0" />
              <circle cx="9" cy="12" r="4.5" fill="#b8b8b8" stroke="none" />
              <path d="M9 9.5V12h2" stroke="#333" strokeWidth={1} />
            </svg>
          </div>
          {dates.map((d) => (
            <span
              key={d.t}
              className="absolute top-0 -translate-x-1/2 text-[16px] font-bold leading-[26px] text-[#c4c4c4]"
              style={{ left: d.x - 4 }}
            >
              {d.t}
            </span>
          ))}
          <div className="absolute left-[1272px] top-[5px] flex h-[18px] w-[118px] items-center justify-center bg-[#585858] text-[16px] text-[#e0e0e0]">
            3:00 06/07/2017
          </div>
        </div>
        <div className="w-[95px] bg-black" />
      </div>
      <div className="flex-1 bg-[#555]" />
    </div>
  );
}
